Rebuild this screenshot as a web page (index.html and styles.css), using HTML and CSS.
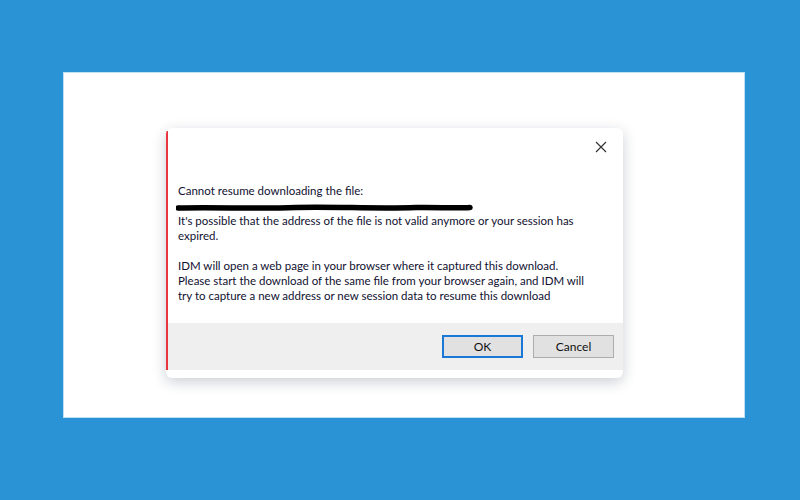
FILE: index.html
```html
<!DOCTYPE html>
<html>
<head>
<meta charset="utf-8">
<link rel="stylesheet" href="styles.css">
</head>
<body>
<div class="stage">
  <div class="panel">
    <div class="dialog">
      <div class="bar"></div>
      <div class="main">
        <div class="titlebar">
          <svg class="close" width="12" height="12" viewBox="0 0 12 12"><path d="M1 1 L11 11 M11 1 L1 11" stroke="#333" stroke-width="1.2" fill="none"/></svg>
        </div>
        <div class="body">
          <p class="line">Cannot resume downloading the file:</p>
          <div class="line scribble">
            <svg width="300" height="15" viewBox="0 0 300 15"><path d="M2 10 C40 9 80 11 120 9.5 C160 8.5 200 11 240 9.5 C260 9 280 10.5 294 9.5" stroke="#000" stroke-width="5.5" stroke-linecap="round" fill="none"/></svg>
          </div>
          <p class="line">It's possible that the address of the file is not valid anymore or your session has<br>expired.</p>
          <p class="line gap">IDM will open a web page in your browser where it captured this download.<br>Please start the download of the same file from your browser again, and IDM will<br>try to capture a new address or new session data to resume this download</p>
        </div>
        <div class="footer">
          <button class="btn ok">OK</button>
          <button class="btn">Cancel</button>
        </div>
      </div>
    </div>
  </div>
</div>
</body>
</html>
```
FILE: styles.css
```css
html, body { margin: 0; padding: 0; }
body {
  width: 800px; height: 500px;
  background: #2a93d6;
  font-family: Lato, "Noto Sans", sans-serif;
}
.stage { padding: 72px 55px 82px 63px; }
.panel {
  width: 682px; height: 346px;
  background: #fff;
  box-shadow: inset 0 0 0 1px #bfe0f4;
  padding: 56px 0 0 103px;
  box-sizing: border-box;
}
.dialog {
  width: 457px; height: 250px;
  background: #fff;
  border-radius: 6px;
  box-shadow: 0 4px 14px rgba(20, 30, 60, 0.22);
  display: flex;
  overflow: hidden;
  position: relative;
}
.bar {
  position: absolute;
  left: 0; top: 3px;
  width: 1.5px; height: 239px;
  background: #e8353f;
}
.main { flex: 1; display: flex; flex-direction: column; }
.titlebar { height: 32px; display: flex; justify-content: flex-end; align-items: center; padding: 0 16px; padding-top: 4px; box-sizing: border-box; }
.close { display: block; margin-top: 2px; }
.body {
  padding: 23px 12px 0 12px;
  height: 163px;
  box-sizing: border-box;
  font-size: 11.5px;
  line-height: 15px;
  color: #101030;
}
.line { margin: 0; white-space: nowrap; }
.gap { margin-top: 15px; }
.scribble { height: 15px; }
.scribble svg { display: block; margin-left: -2px; }
.footer {
  height: 47px;
  background: #efefef;
  display: flex;
  justify-content: flex-end;
  align-items: center;
  gap: 10px;
  padding: 0 9px 0 0;
  box-sizing: border-box;
}
.btn {
  width: 81px; height: 23px;
  background: #e1e1e1;
  border: 1px solid #adadad;
  font-family: Lato, "Noto Sans", sans-serif;
  font-size: 12px;
  color: #101010;
  padding: 0;
  margin: 0;
}
.btn.ok { border: 2px solid #1a78d6; }
```
